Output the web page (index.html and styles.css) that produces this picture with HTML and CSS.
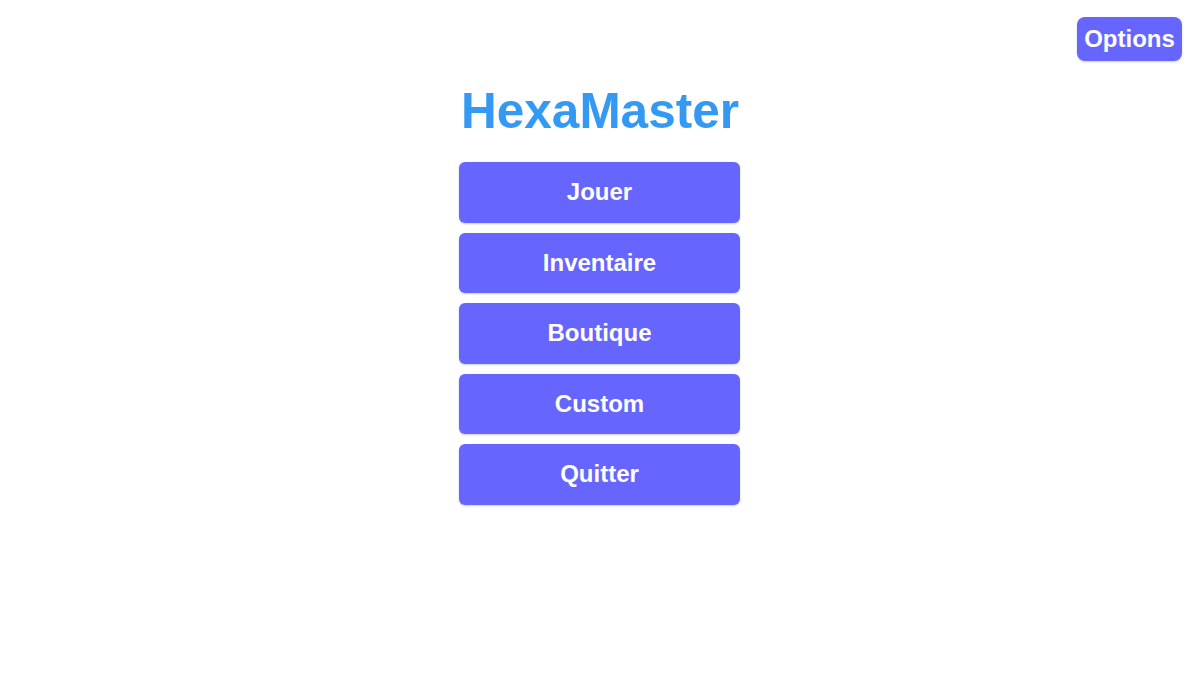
FILE: index.html
```html
<!DOCTYPE html>
<html lang="fr">
<head>
<meta charset="utf-8">
<title>HexaMaster</title>
<link rel="stylesheet" href="styles.css">
</head>
<body>
<button class="options-btn">Options</button>
<main class="menu">
  <h1 class="title">HexaMaster</h1>
  <nav class="menu-list">
    <button class="menu-btn">Jouer</button>
    <button class="menu-btn">Inventaire</button>
    <button class="menu-btn">Boutique</button>
    <button class="menu-btn">Custom</button>
    <button class="menu-btn">Quitter</button>
  </nav>
</main>
</body>
</html>
```
FILE: styles.css
```css
html, body {
  margin: 0;
  padding: 0;
  background: #ffffff;
  font-family: "Liberation Sans", Arial, sans-serif;
}
body {
  width: 1200px;
  height: 675px;
  position: relative;
  overflow: hidden;
}
.options-btn {
  position: absolute;
  top: 17px;
  right: 18px;
  width: 105px;
  height: 44px;
  padding: 0;
  border: none;
  border-radius: 8px;
  background: #6666ff;
  color: #ffffff;
  font-family: inherit;
  font-weight: bold;
  font-size: 24px;
  box-shadow: 0 1px 2px rgba(60, 60, 160, 0.25);
}
.menu {
  display: flex;
  flex-direction: column;
  align-items: center;
  padding-top: 81px;
}
.title {
  margin: 0 0 21px;
  font-size: 49.5px;
  line-height: 60px;
  font-weight: bold;
  color: #3399f3;
}
.menu-list {
  display: flex;
  flex-direction: column;
  gap: 10px;
  margin-right: 1px;
}
.menu-btn {
  width: 281px;
  height: 60.5px;
  padding: 0;
  border: none;
  border-radius: 6px;
  background: #6666ff;
  color: #ffffff;
  font-family: inherit;
  font-weight: bold;
  font-size: 24px;
  box-shadow: 0 1px 2px rgba(60, 60, 160, 0.25);
}
```
